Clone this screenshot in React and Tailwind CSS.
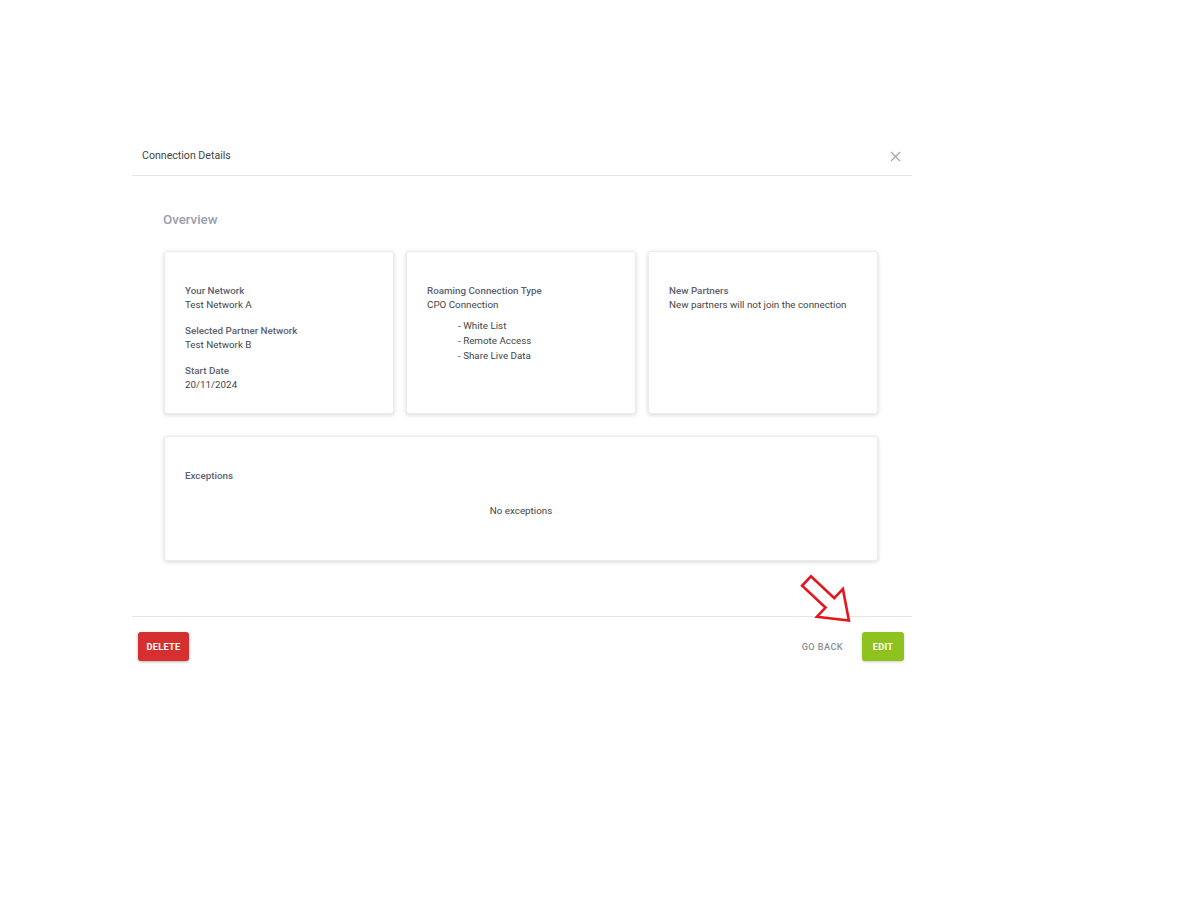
import React from "react";

function Field({ label, value, className = "" }) {
  return (
    <div className={className}>
      <div className="text-[9.8px] leading-[14px] font-medium text-[#5d6272]">{label}</div>
      <div className="text-[9.8px] leading-[14px] text-[#454545]">{value}</div>
    </div>
  );
}

function Card({ children, className = "" }) {
  return (
    <div className={"bg-white rounded-[3px] border border-[#ececec] shadow-[0_1px_4px_rgba(0,0,0,0.16)] " + className}>
      {children}
    </div>
  );
}

export default function App() {
  return (
    <div className="min-h-[900px] w-[1200px] bg-white font-['Roboto',sans-serif] pt-[137px] pl-[132px]">
      <div className="relative w-[780px]">
        {/* Header */}
        <div className="h-[39px] flex items-center justify-between border-b border-[#e6e6e6] pl-[10px] pr-[11px]">
          <span className="text-[10.6px] text-[#444]">Connection Details</span>
          <svg width="11" height="11" viewBox="0 0 11 11" className="text-[#a8a8a8]">
            <path d="M1 1L10 10M10 1L1 10" stroke="currentColor" strokeWidth="1.3" fill="none" />
          </svg>
        </div>

        {/* Body */}
        <div className="pl-[31px] pr-[34px] pt-[34px] pb-[55px] border-b border-[#e6e6e6]">
          <div className="text-[13.3px] leading-[20px] font-medium text-[#9aa0ab]">Overview</div>
          <div className="mt-[21px] pl-[1px] grid grid-cols-3 gap-x-[12px]">
            <Card className="h-[163px] pt-[32px] pl-[20px]">
              <Field label="Your Network" value="Test Network A" />
              <Field label="Selected Partner Network" value="Test Network B" className="mt-[12px]" />
              <Field label="Start Date" value="20/11/2024" className="mt-[12px]" />
            </Card>
            <Card className="h-[163px] pt-[32px] pl-[20px]">
              <Field label="Roaming Connection Type" value="CPO Connection" />
              <ul className="mt-[6px] pl-[31px] text-[9.8px] leading-[15px] text-[#454545]">
                <li>- White List</li>
                <li>- Remote Access</li>
                <li>- Share Live Data</li>
              </ul>
            </Card>
            <Card className="h-[163px] pt-[32px] pl-[20px]">
              <Field label="New Partners" value="New partners will not join the connection" />
            </Card>
          </div>
          <Card className="mt-[22px] ml-[1px] h-[125px] pt-[32px] px-[20px]">
            <div className="text-[9.8px] leading-[14px] font-medium text-[#5d6272]">Exceptions</div>
            <div className="mt-[21px] text-center text-[9.8px] leading-[14px] text-[#454545]">No exceptions</div>
          </Card>
        </div>

        {/* Footer */}
        <div className="flex items-center justify-between pt-[15px] pl-[6px] pr-[8px]">
          <button className="w-[51px] h-[29px] rounded-[3px] bg-[#d52f30] text-white text-[9.2px] font-bold tracking-[0.3px] shadow-[0_1px_3px_rgba(0,0,0,0.3)]">
            DELETE
          </button>
          <div className="flex items-center gap-[19px]">
            <button className="text-[9.2px] font-medium tracking-[0.4px] text-[#8a8f99]">GO BACK</button>
            <button className="w-[42px] h-[29px] rounded-[3px] bg-[#8dc21f] text-white text-[9.2px] font-bold tracking-[0.3px] shadow-[0_1px_3px_rgba(0,0,0,0.2)]">
              EDIT
            </button>
          </div>
        </div>

        {/* Red arrow annotation */}
        <svg
          width="62"
          height="58"
          viewBox="0 0 62 58"
          className="absolute left-[663px] top-[433px]"
        >
          <polygon
            points="15.9,6.3 39.3,28.1 47.9,18.9 53.9,50.6 21.9,46.7 30.5,37.6 7.1,15.8"
            fill="white"
            stroke="#e8141c"
            strokeWidth="2.6"
            strokeLinejoin="miter"
          />
        </svg>
      </div>
    </div>
  );
}
